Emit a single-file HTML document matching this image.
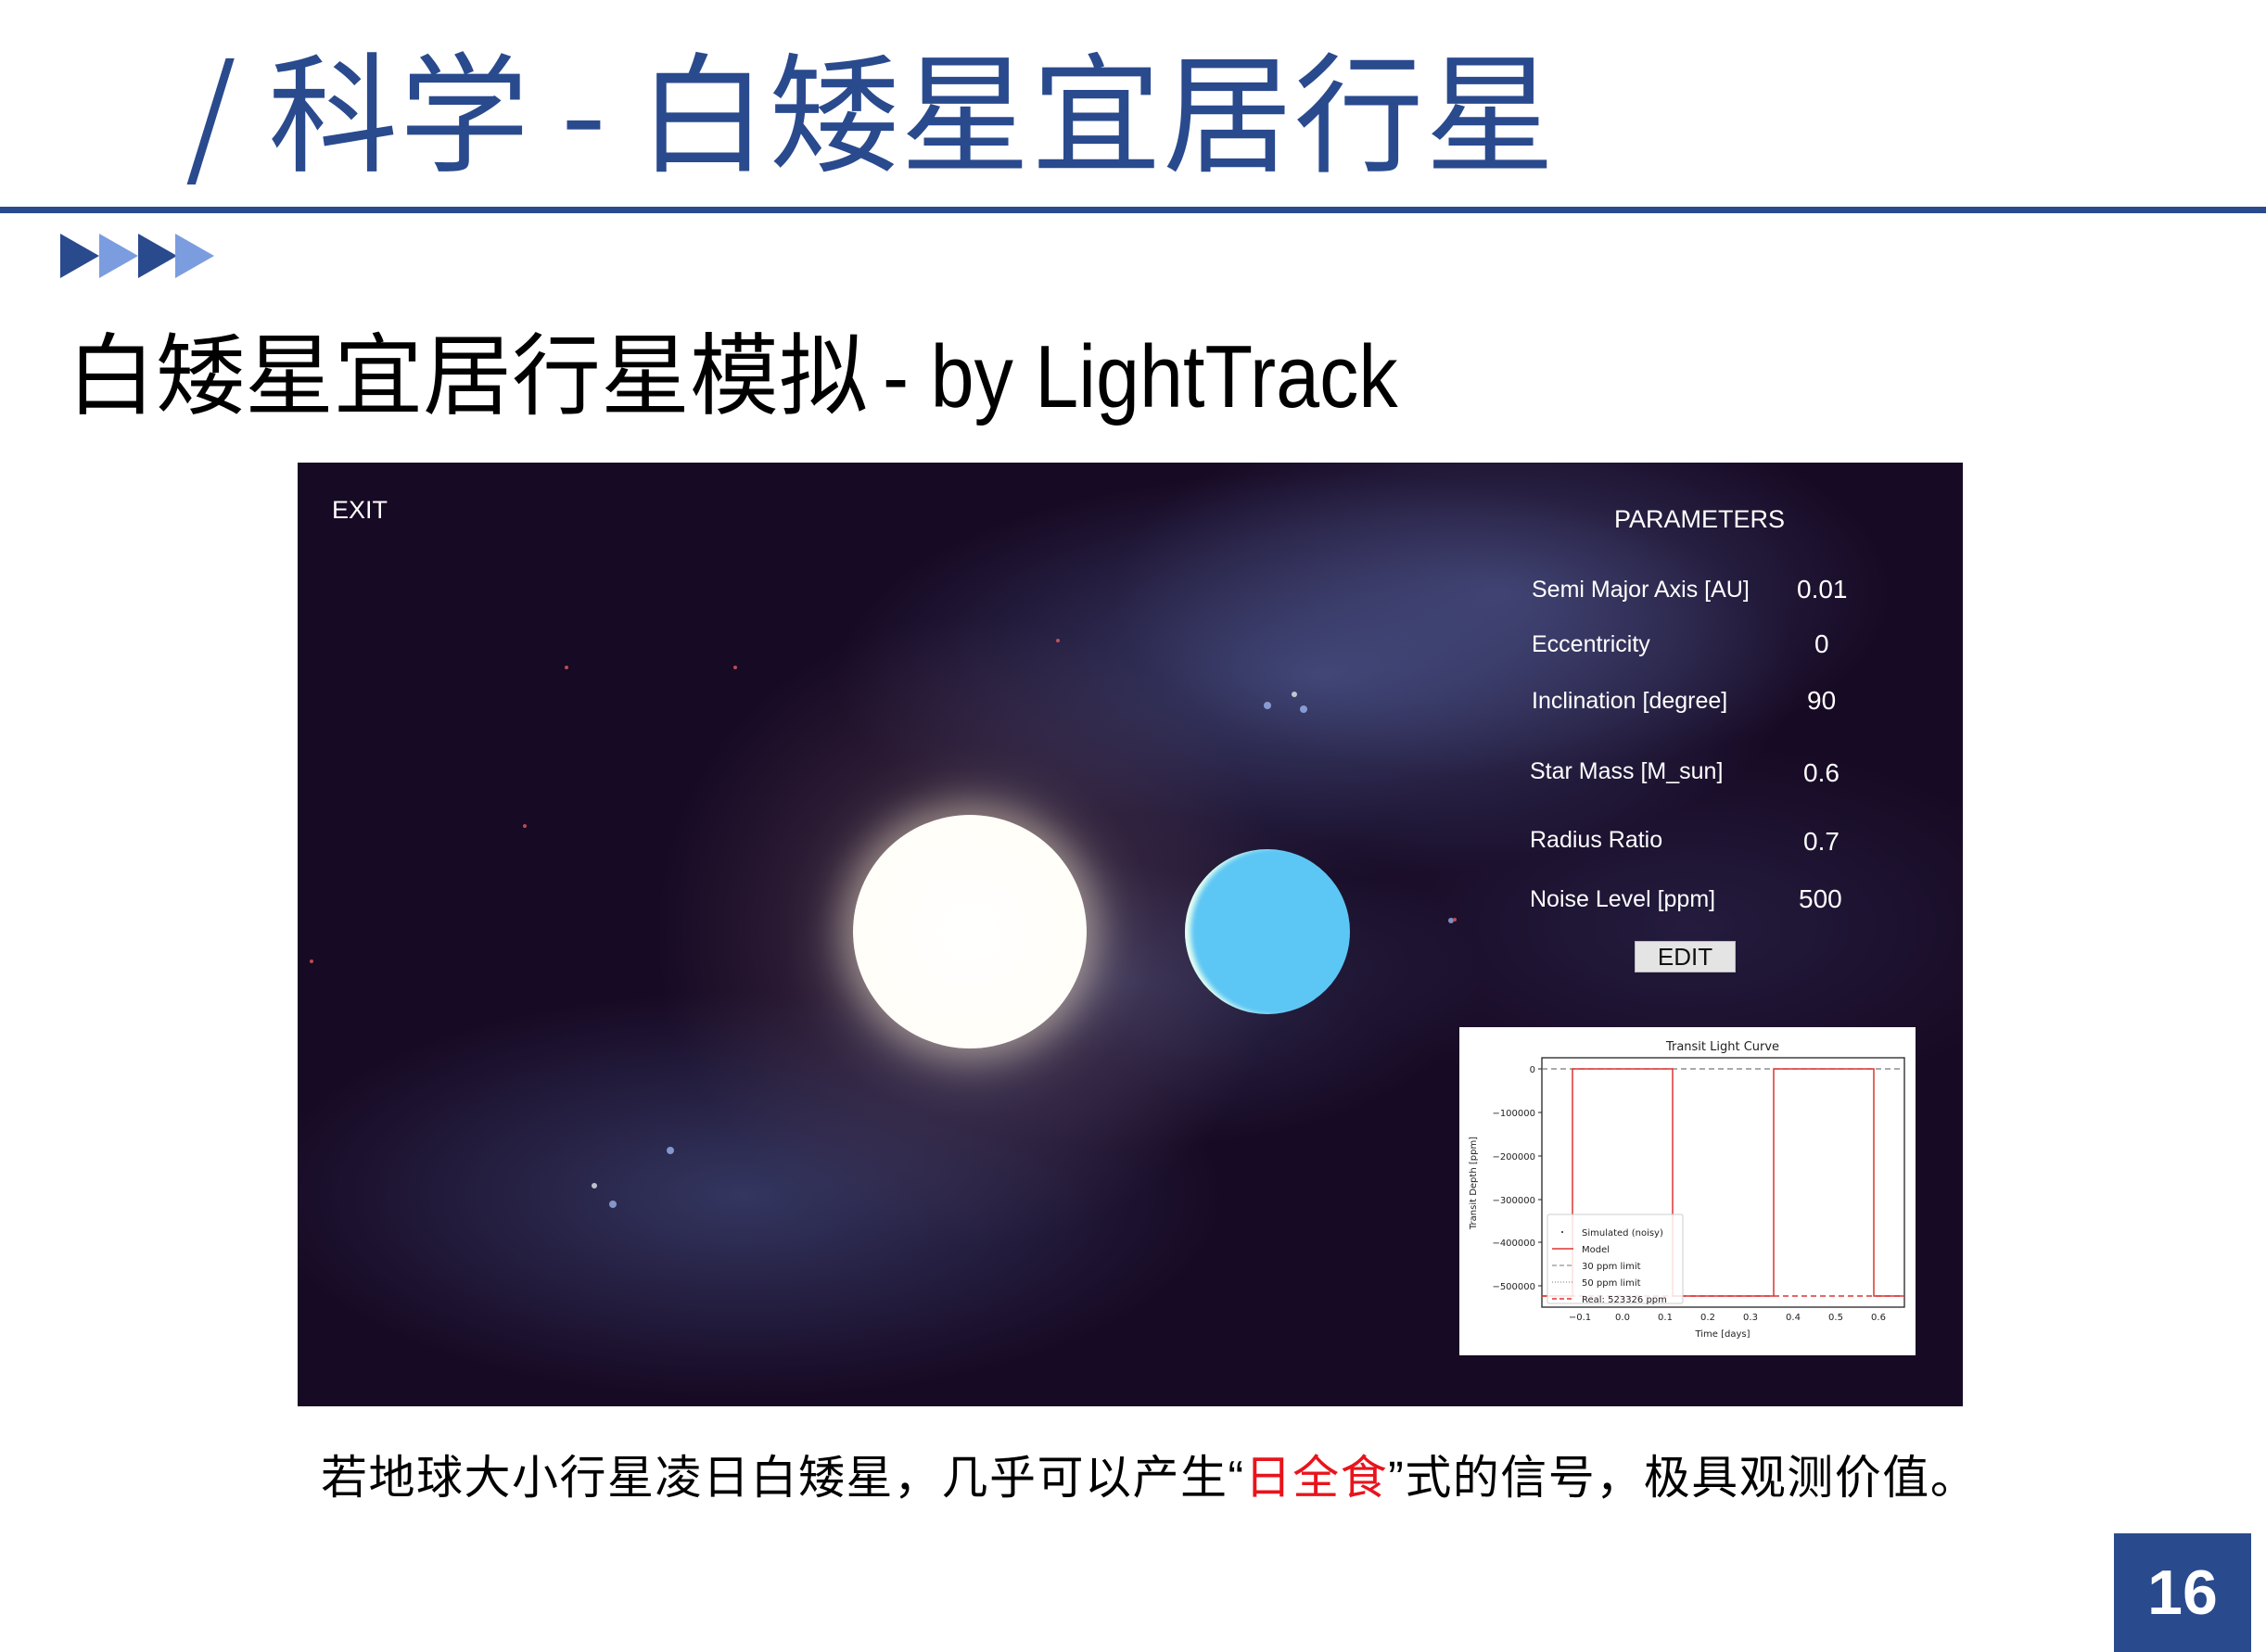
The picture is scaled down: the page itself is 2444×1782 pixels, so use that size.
<!DOCTYPE html>
<html><head><meta charset="utf-8"><style>
html,body{margin:0;padding:0;background:#fff;}
body{width:2444px;height:1782px;position:relative;overflow:hidden;font-family:"Liberation Sans","Noto Sans CJK SC",sans-serif;}
.abs{position:absolute;}
.title{left:200px;top:30px;font-size:140px;color:#2a4a8e;font-family:"Noto Sans CJK SC",sans-serif;white-space:nowrap;line-height:1.2;letter-spacing:1.5px;}
.line{left:0;top:223px;width:2444px;height:7px;background:#2a4a8e;}
.sub{left:72px;top:340px;font-size:96px;color:#000;font-family:"Noto Sans CJK SC",sans-serif;white-space:nowrap;line-height:1.2;}
.sub span{font-family:"Liberation Sans",sans-serif;display:inline-block;transform:scaleX(0.88);transform-origin:left center;margin-left:16px;}
.scene{left:321px;top:499px;width:1796px;height:1018px;overflow:hidden;
background:
radial-gradient(circle at 725px 506px, rgba(255,240,220,0.35) 0, rgba(120,90,110,0.2) 200px, rgba(0,0,0,0) 340px),
radial-gradient(ellipse 520px 220px at 1100px 230px, rgba(85,100,160,0.6), rgba(0,0,0,0) 100%),
radial-gradient(ellipse 420px 200px at 1300px 140px, rgba(90,100,160,0.5), rgba(0,0,0,0) 100%),
radial-gradient(ellipse 520px 220px at 480px 790px, rgba(75,90,145,0.55), rgba(0,0,0,0) 100%),
radial-gradient(ellipse 380px 180px at 900px 560px, rgba(75,85,135,0.45), rgba(0,0,0,0) 100%),
radial-gradient(ellipse 400px 200px at 1500px 500px, rgba(60,60,110,0.35), rgba(0,0,0,0) 100%),
#170a24;}
.w{color:#fff;font-size:25px;}
.star{left:599px;top:380px;width:252px;height:252px;border-radius:50%;background:radial-gradient(circle,#fff 0,#fffdf6 85%,#f2e6d0 100%);box-shadow:0 0 40px 12px rgba(255,240,210,0.45);}
.planet{left:957px;top:417px;width:178px;height:178px;border-radius:50%;background:#5cc6f4;box-shadow:inset 8px 0 6px -2px #e8fff0;}
.edit{left:1442px;top:516px;width:109px;height:34px;background:#e4e4e4;border:1px solid #bbb;box-sizing:border-box;color:#111;font-size:26px;text-align:center;line-height:33px;}
.chart{left:1253px;top:609px;width:492px;height:354px;background:#fff;}
.cap{left:346px;top:1555px;font-size:50px;color:#000;font-family:"Noto Sans CJK SC",sans-serif;white-space:nowrap;line-height:1.4;letter-spacing:1.5px;}
.q{font-family:"Liberation Sans",sans-serif;}
.pg{left:2280px;top:1654px;width:148px;height:128px;background:#2a4a8e;color:#fff;font-weight:bold;font-size:68px;text-align:center;line-height:128px;}
</style></head><body>
<div class="abs title">/ 科学 - 白矮星宜居行星</div>
<div class="abs line"></div>
<svg class="abs" style="left:65px;top:252px" width="170" height="50">
<polygon points="0,0 42,24 0,48" fill="#2a4a8e"/>
<polygon points="42,0 84,24 42,48" fill="#7b9de0"/>
<polygon points="84,0 126,24 84,48" fill="#2a4a8e"/>
<polygon points="124,0 166,24 124,48" fill="#7b9de0"/>
</svg>
<div class="abs sub">白矮星宜居行星模拟<span>- by LightTrack</span></div>
<div class="abs scene">
<svg class="abs" style="left:0;top:0" width="1796" height="1018">
<g fill="#fff" opacity="0.7">
<circle cx="1046" cy="262" r="4" fill="#aac4ff"/><circle cx="1085" cy="266" r="4" fill="#aac4ff"/><circle cx="1075" cy="250" r="3"/>
<circle cx="402" cy="742" r="4" fill="#aac4ff"/><circle cx="340" cy="800" r="4" fill="#aac4ff"/><circle cx="320" cy="780" r="3"/>
<circle cx="1244" cy="494" r="3" fill="#aac4ff"/>
<circle cx="472" cy="221" r="2" fill="#f66"/><circle cx="290" cy="221" r="2" fill="#f66"/><circle cx="15" cy="538" r="2" fill="#f66"/><circle cx="245" cy="392" r="2" fill="#f66"/><circle cx="1248" cy="493" r="2" fill="#f66"/><circle cx="820" cy="192" r="2" fill="#f66"/>
</g>
</svg>
<div class="abs w" style="left:37px;top:36px;font-size:27px">EXIT</div>
<div class="abs w" style="left:1420px;top:46px;font-size:27px">PARAMETERS</div>
<div class="abs w" style="left:1331px;top:123px">Semi Major Axis [AU]</div><div class="abs w" style="left:1617px;top:121px;font-size:28px">0.01</div>
<div class="abs w" style="left:1331px;top:182px">Eccentricity</div><div class="abs w" style="left:1636px;top:180px;font-size:28px">0</div>
<div class="abs w" style="left:1331px;top:243px">Inclination [degree]</div><div class="abs w" style="left:1628px;top:241px;font-size:28px">90</div>
<div class="abs w" style="left:1329px;top:319px">Star Mass [M_sun]</div><div class="abs w" style="left:1624px;top:319px;font-size:28px">0.6</div>
<div class="abs w" style="left:1329px;top:393px">Radius Ratio</div><div class="abs w" style="left:1624px;top:393px;font-size:28px">0.7</div>
<div class="abs w" style="left:1329px;top:457px">Noise Level [ppm]</div><div class="abs w" style="left:1619px;top:455px;font-size:28px">500</div>
<div class="abs star"></div>
<div class="abs planet"></div>
<div class="abs edit">EDIT</div>
<svg class="abs chart" width="492" height="354" font-family="DejaVu Sans,sans-serif" font-size="10" fill="#222">
<text x="284" y="25" font-size="13" text-anchor="middle">Transit Light Curve</text>
<rect x="89" y="33" width="391" height="269" fill="none" stroke="#222" stroke-width="1.3"/>
<line x1="89" y1="45" x2="480" y2="45" stroke="#777" stroke-dasharray="6,4" stroke-width="1.2"/>
<line x1="89" y1="290" x2="480" y2="290" stroke="#d33" stroke-dasharray="6,4" stroke-width="1.5"/>
<polyline points="89,290 122,290 122,45 230,45 230,290 339,290 339,45 447,45 447,290 480,290" fill="none" stroke="#d33" stroke-width="1.5"/>
<g text-anchor="end"><text x="82" y="49">0</text><text x="82" y="96">−100000</text><text x="82" y="143">−200000</text><text x="82" y="190">−300000</text><text x="82" y="236">−400000</text><text x="82" y="283">−500000</text></g>
<g stroke="#222"><line x1="85" y1="45" x2="89" y2="45"/><line x1="85" y1="92" x2="89" y2="92"/><line x1="85" y1="139" x2="89" y2="139"/><line x1="85" y1="186" x2="89" y2="186"/><line x1="85" y1="232" x2="89" y2="232"/><line x1="85" y1="279" x2="89" y2="279"/></g>
<g text-anchor="middle"><text x="130" y="316">−0.1</text><text x="176" y="316">0.0</text><text x="222" y="316">0.1</text><text x="268" y="316">0.2</text><text x="314" y="316">0.3</text><text x="360" y="316">0.4</text><text x="406" y="316">0.5</text><text x="452" y="316">0.6</text>
<text x="284" y="334">Time [days]</text></g>
<text transform="translate(18,168) rotate(-90)" text-anchor="middle">Transit Depth [ppm]</text>
<rect x="95" y="202" width="146" height="96" fill="#fff" fill-opacity="0.85" stroke="#ccc" rx="2"/>
<g font-size="10"><text x="132" y="225">Simulated (noisy)</text><text x="132" y="243">Model</text><text x="132" y="261">30 ppm limit</text><text x="132" y="279">50 ppm limit</text><text x="132" y="297">Real: 523326 ppm</text></g>
<circle cx="111" cy="221" r="1" fill="#222"/>
<line x1="100" y1="239" x2="123" y2="239" stroke="#d33" stroke-width="1.5"/>
<line x1="100" y1="257" x2="123" y2="257" stroke="#777" stroke-dasharray="5,3"/>
<line x1="100" y1="275" x2="123" y2="275" stroke="#777" stroke-dasharray="1,2"/>
<line x1="100" y1="293" x2="123" y2="293" stroke="#d33" stroke-dasharray="5,3" stroke-width="1.5"/>
</svg>
</div>
<div class="abs cap">若地球大小行星凌日白矮星，几乎可以产生<span class="q">“</span><span style="color:#e8141c">日全食</span><span class="q">”</span>式的信号，极具观测价值。</div>
<div class="abs pg">16</div>
</body></html>
